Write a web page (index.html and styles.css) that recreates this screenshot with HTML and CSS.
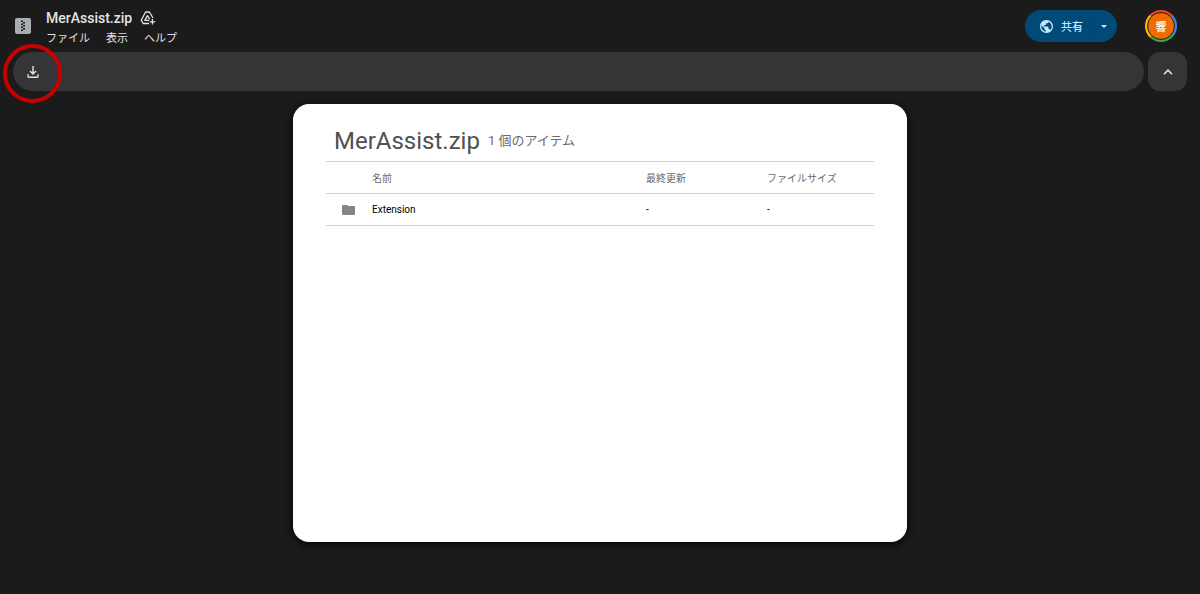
FILE: index.html
```html
<!DOCTYPE html>
<html lang="ja">
<head>
    <meta charset="UTF-8">
    <meta name="viewport" content="width=device-width, initial-scale=1.0">
    <title>MerAssist.zip</title>
    <link rel="stylesheet" href="styles.css">
</head>
<body>
    <header class="header">
        <svg class="file-icon" viewBox="0 0 16 16" aria-hidden="true">
            <rect width="16" height="16" rx="2" fill="#a9acb0"/>
            <path d="M6 2.5h2V4H6zM8 4h2v1.5H8zM6 5.500h2V7H6zM8 7h2v1.500H8zM6 8.500h2V10H6zM8 10h2v1.500H8zM6 11.500h2V13H6z" fill="#1b1b1b"/>
        </svg>
        <div class="file-info">
            <div class="file-title">
                <h1>MerAssist.zip</h1>
                <button class="icon-button" aria-label="ドライブに追加">
                    <svg width="16" height="14" viewBox="0 0 16 14" fill="none" stroke="#e3e3e3" stroke-width="1.3" stroke-linejoin="round">
                        <path d="M9 12.5H3.2L1.2 9.200 5.600 1h3.800l3.600 6"/>
                        <path d="M9 9.400H4.800L7.500 4.600l2.200 3.800"/>
                        <path d="M12.400 8v5.600M9.600 10.800h5.600"/>
                    </svg>
                </button>
            </div>
            <nav class="menu">
                <button>ファイル</button>
                <button>表示</button>
                <button>ヘルプ</button>
            </nav>
        </div>
        <div class="share">
            <button class="share-main">
                <svg width="13" height="13" viewBox="2 2 20 20" fill="#c2e7ff" aria-hidden="true">
                    <path d="M12 2C6.48 2 2 6.48 2 12s4.48 10 10 10 10-4.48 10-10S17.52 2 12 2zm-1 17.93c-3.95-.49-7-3.85-7-7.93 0-.62.08-1.21.21-1.79L9 15v1c0 1.1.9 2 2 2v1.93zm6.9-2.54c-.26-.81-1-1.39-1.9-1.39h-1v-3c0-.55-.45-1-1-1H8v-2h2c.55 0 1-.45 1-1V7h2c1.1 0 2-.9 2-2v-.41c2.93 1.19 5 4.06 5 7.41 0 2.08-.8 3.97-2.1 5.39z"/>
                </svg>
                共有
            </button>
            <button class="share-more" aria-label="共有オプション">
                <svg width="6" height="3" viewBox="0 0 6 3" fill="#c2e7ff"><path d="M0 0h6L3 3z"/></svg>
            </button>
        </div>
        <button class="account"><span>響</span></button>
    </header>

    <div class="toolbar-row">
        <div class="toolbar">
            <button class="icon-button download" aria-label="ダウンロード">
                <svg width="12" height="12" viewBox="0 0 12 12" fill="none" stroke="#e3e3e3" stroke-width="1.4">
                    <path d="M6 0v7.6M3 5l3 3 3-3"/>
                    <path d="M1 8.2v2.1q0 .9.9.9h8.2q.9 0 .9-.9V8.2"/>
                </svg>
            </button>
            <span class="highlight"></span>
        </div>
        <button class="collapse" aria-label="メニューを非表示">
            <svg width="10" height="6" viewBox="0 0 10 6" fill="none" stroke="#e3e3e3" stroke-width="1.6"><path d="M1 5.2l4-4 4 4"/></svg>
        </button>
    </div>

    <main class="card">
        <div class="archive-title">
            <h2>MerAssist.zip</h2>
            <span>1 個のアイテム</span>
        </div>
        <table class="files">
            <thead>
                <tr>
                    <th class="col-icon"></th>
                    <th class="col-name">名前</th>
                    <th class="col-date">最終更新</th>
                    <th class="col-size">ファイルサイズ</th>
                </tr>
            </thead>
            <tbody>
                <tr>
                    <td class="col-icon">
                        <svg width="13" height="10" viewBox="0 0 13 10" fill="#858585" aria-hidden="true"><path d="M1 0h4l1.3 1H12q1 0 1 1v7q0 1-1 1H1q-1 0-1-1V1q0-1 1-1z"/></svg>
                    </td>
                    <td>Extension</td>
                    <td>-</td>
                    <td>-</td>
                </tr>
            </tbody>
        </table>
    </main>
</body>
</html>
```

FILE: styles.css
```css
* {
    box-sizing: border-box;
}

body {
    display: flex;
    flex-direction: column;
    min-height: 100vh;
    margin: 0;
    background: #1b1b1b;
    color: #e3e3e3;
    font-family: Roboto, "Noto Sans CJK JP", sans-serif;
}

h1, h2 {
    margin: 0;
    font-weight: 400;
}

button {
    padding: 0;
    border: none;
    background: none;
    color: inherit;
    font: inherit;
    cursor: pointer;
}

svg {
    display: block;
}

.header {
    display: flex;
    align-items: center;
    height: 52px;
    padding: 0 23px 0 15px;
}

.file-icon {
    width: 16px;
    height: 16px;
    margin-right: 15px;
}

.file-info {
    flex: 1;
    padding-top: 6px;
}

.file-title {
    display: flex;
    align-items: center;
    gap: 8px;
    height: 20px;
}

.file-title h1 {
    font-size: 14px;
    font-weight: 500;
    line-height: 20px;
}

.menu {
    display: flex;
    gap: 16px;
    height: 22px;
    font-size: 11px;
    line-height: 22px;
}

.share {
    display: flex;
    height: 32px;
    margin-right: 28px;
    border-radius: 16px;
    background: #004a77;
    color: #c2e7ff;
    font-size: 11px;
    font-weight: 500;
    overflow: hidden;
}

.share-main {
    display: flex;
    align-items: center;
    gap: 8px;
    padding: 0 6px 0 15px;
}

.share-more {
    display: flex;
    align-items: center;
    justify-content: center;
    width: 28px;
    border-left: 1px solid #1d3b53;
}

/* Account picture with the four colour ring */
.account {
    width: 32px;
    height: 32px;
    padding: 2px;
    border-radius: 50%;
    background: conic-gradient(from -45deg, #ea4335 90deg, #4285f4 90deg 170deg, #34a853 170deg 270deg, #fbbc04 270deg);
}

.account span {
    display: flex;
    align-items: center;
    justify-content: center;
    height: 28px;
    border: 1px solid #1b1b1b;
    border-radius: 50%;
    background: #ef6c00;
    color: #fff;
    font-size: 11px;
    font-weight: 500;
}

.toolbar-row {
    display: flex;
    gap: 4px;
    padding: 0 13px;
}

.toolbar {
    position: relative;
    display: flex;
    flex: 1;
    align-items: center;
    height: 39px;
    padding-left: 14px;
    border-radius: 20px;
    background: #333537;
}

/* Red ring over the download button */
.highlight {
    position: absolute;
    top: -8px;
    left: -10px;
    width: 59px;
    height: 59px;
    border: 4px solid #c80000;
    border-radius: 50%;
    pointer-events: none;
}

.collapse {
    display: flex;
    align-items: center;
    justify-content: center;
    width: 39px;
    height: 39px;
    border-radius: 12px;
    background: #333537;
}

.card {
    flex: 1;
    width: calc(100% - 26px);
    max-width: 614px;
    margin: 13px auto 52px;
    padding: 17px 33px;
    border-radius: 16px;
    background: #fff;
    box-shadow: 0 2px 8px #000;
    color: #000;
}

.archive-title {
    display: flex;
    align-items: center;
    gap: 8px;
    height: 40px;
    padding-left: 8px;
    color: #505050;
    line-height: 40px;
}

.archive-title h2 {
    font-size: 24px;
}

.archive-title span {
    color: #6b6b6b;
    font-size: 13px;
}

.files {
    width: 100%;
    border-collapse: collapse;
    border-top: 1px solid #d0d0d0;
    table-layout: fixed;
    font-size: 10px;
    text-align: left;
}

.files tr {
    height: 32px;
    border-bottom: 1px solid #d0d0d0;
}

.files th,
.files td {
    padding: 0;
    font-weight: 400;
}

.files th {
    color: #6b6b6b;
}

.files .col-icon {
    width: 46px;
    padding-left: 16px;
}

.col-date {
    width: 121px;
}

.col-size {
    width: 107px;
}
```
